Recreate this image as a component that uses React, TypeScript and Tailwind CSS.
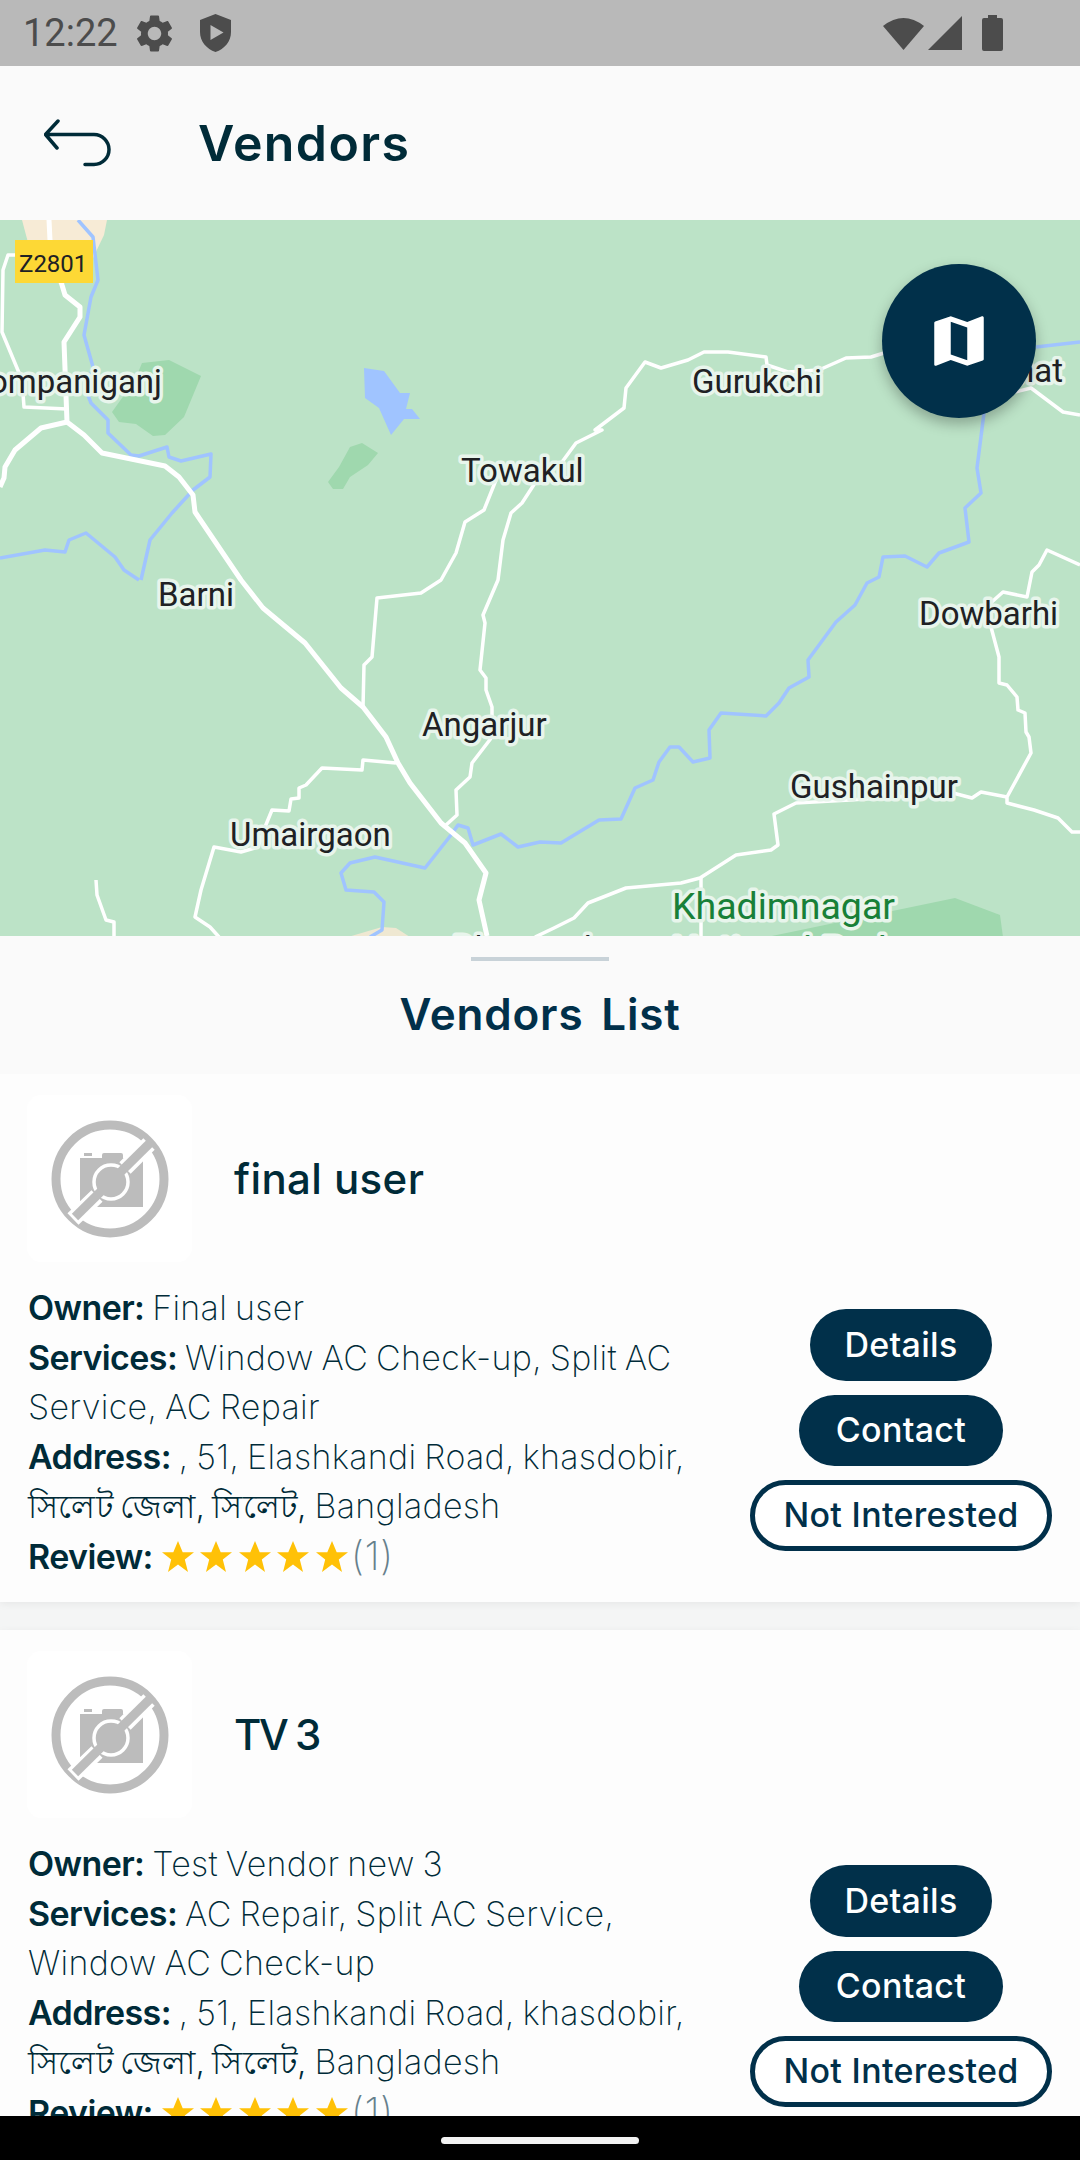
const NAVY = '#01304a';

const MAJOR_ROADS = [
  '49,220 50,240 62,285 65,295 80,307 80,317 64,342 67,422 84,435 102,453 165,466 179,477 193,495 195,512 241,580 263,608 305,643 341,688 363,707 386,737 398,763 410,783 441,823 465,843 486,873 479,900 487,936',
  '67,422 41,428 15,450 5,467 4,478 0,487',
];

const MINOR_ROADS = [
  '15,255 8,255 3,270 2,332 22,380 24,407 67,409',
  '496,480 484,510 465,522 456,553 441,580 421,593 377,598 372,657 364,665 363,707',
  '535,483 522,503 511,513 503,540 498,580 483,615 485,623 480,670 486,678 486,690 492,707 492,737 472,763 470,777 456,790 457,815 446,825',
  '535,483 562,462 576,443 602,430 595,430 624,408 626,388 645,362 661,368 688,360 704,352 728,352 766,357 767,365 788,372 819,370 846,358 871,357 884,353',
  '1015,392 1031,388 1063,412 1080,415',
  '1080,565 1047,550 1039,565 1032,572 1027,597 1003,592 985,608',
  '991,627 999,657 999,683 1007,685 1017,697 1018,710 1025,713 1026,732 1029,737 1031,753 1007,797 1007,803 1034,810 1058,818 1072,832 1080,832',
  '1007,797 981,792 972,798 953,793 850,800 796,803 774,814 778,845 771,850 736,855 700,878 681,883 626,888 588,903 574,918 554,928 535,937',
  '701,878 701,936',
  '396,763 363,760 362,770 322,768 306,785 299,788 299,798 291,799 289,811 272,810 265,827 258,847 241,852 214,847 201,890 195,917 210,927 219,937',
  '96,880 97,895 106,920 114,922 114,937',
];

const RIVERS = [
  '78,220 93,237 98,280 91,297 84,335 93,367 86,390 91,403 108,420 108,433 131,455 139,456 167,447 169,457 181,461 211,454 210,477 193,490 172,513 150,540 141,580',
  '0,558 45,550 65,552 69,540 86,533 115,557 124,570 139,580',
  '984,413 977,468 981,493 965,508 969,542 939,553 927,567 905,556 883,557 879,577 867,583 855,605 836,622 808,660 809,677 789,688 779,703 766,716 721,713 709,730 710,758 693,762 679,747 670,747 659,762 653,780 635,788 621,819 599,820 561,843 540,842 518,847 501,834 473,845 468,828 458,825 451,835 425,868 375,857 350,863 341,873 346,890 374,892 384,902 382,930 370,937',
  '1036,347 1080,342',
];

const LABELS = [
  { text: 'Companiganj', x: 162, y: 393, anchor: 'end' },
  { text: 'Gurukchi', x: 692, y: 393 },
  { text: 'Kalirhat', x: 1063, y: 382, anchor: 'end' },
  { text: 'Towakul', x: 461, y: 482 },
  { text: 'Barni', x: 158, y: 606 },
  { text: 'Dowbarhi', x: 919, y: 625 },
  { text: 'Angarjur', x: 422, y: 736 },
  { text: 'Gushainpur', x: 790, y: 798 },
  { text: 'Umairgaon', x: 230, y: 846 },
  { text: 'Dhanagul', x: 453, y: 960 },
];

const VENDORS = [
  {
    name: 'final user',
    nameClass: 'tracking-[0.4px]',
    owner: 'Final user',
    services: 'Window AC Check-up, Split AC Service, AC Repair',
  },
  {
    name: 'TV 3',
    nameClass: 'tracking-[-2.5px]',
    owner: 'Test Vendor new 3',
    services: 'AC Repair, Split AC Service, Window AC Check-up',
  },
];

const VendorMap = () => (
  <svg className="block h-full w-full" viewBox="0 220 1080 716">
    <rect x="0" y="220" width="1080" height="716" fill="#bce3c7" />
    <polygon points="22,220 107,220 104,235 93,258 60,285 30,250" fill="#f7ebd6" />
    <polygon points="348,937 382,927 396,928 410,937" fill="#efe8d2" />
    <g fill="#9fd8ae">
      <polygon points="142,363 169,360 201,376 184,417 165,435 153,436 136,424 119,422 112,412 135,380" />
      <polygon points="350,447 362,443 378,453 368,465 350,477 343,489 333,489 328,482 339,467" />
      <polygon points="767,937 955,898 1000,915 1003,937" />
    </g>
    <polygon
      points="364,368 384,371 400,393 410,393 406,409 412,409 420,419 404,419 391,435 379,408 365,398"
      fill="#a0c4ff"
    />
    <g fill="none" stroke="#a0c4ff" strokeWidth="3.5" strokeLinejoin="round">
      {RIVERS.map((points) => (
        <polyline key={points} points={points} />
      ))}
    </g>
    <g fill="none" stroke="#ffffff" strokeLinejoin="round">
      {MINOR_ROADS.map((points) => (
        <polyline key={points} points={points} strokeWidth="3.5" />
      ))}
      {MAJOR_ROADS.map((points) => (
        <polyline key={points} points={points} strokeWidth="5" />
      ))}
    </g>
    <g fontFamily="Roboto, sans-serif" fontSize="33" fill="#202124" stroke="#e8f5ec" strokeWidth="7" paintOrder="stroke" strokeLinejoin="round">
      {LABELS.map((label) => (
        <text key={label.text} x={label.x} y={label.y} textAnchor={label.anchor}>
          {label.text}
        </text>
      ))}
      <text x="672" y="919" fontSize="37.500" fill="#188038">
        Khadimnagar
      </text>
      <text x="672" y="963" fontSize="37.500" fill="#188038">
        National Park
      </text>
    </g>
    <rect x="15" y="240" width="78" height="43" fill="#fdd835" />
    <text x="19" y="272" fontFamily="Roboto, sans-serif" fontSize="24" fill="#202124">
      Z2801
    </text>
  </svg>
);

const StatusBar = () => (
  <div className="relative flex h-[66px] shrink-0 items-center justify-between bg-[#b9b9b9] pl-[23px] pr-[77px] text-[#4c4c4c]">
    <div className="flex items-center">
      <span className="font-['Roboto',sans-serif] text-[38px] leading-none">12:22</span>
      <svg className="ml-[14px] h-[45px] w-[45px]" viewBox="0 0 24 24" fill="currentColor">
        <path d="M19.14,12.94c0.04-0.3,0.06-0.61,0.06-0.94c0-0.32-0.02-0.64-0.07-0.94l2.03-1.58c0.18-0.14,0.23-0.41,0.12-0.61 l-1.92-3.32c-0.12-0.22-0.37-0.29-0.59-0.22l-2.39,0.96c-0.5-0.38-1.03-0.7-1.62-0.94L14.4,2.81c-0.04-0.24-0.24-0.41-0.48-0.41 h-3.84c-0.24,0-0.43,0.17-0.47,0.41L9.25,5.35C8.66,5.59,8.12,5.92,7.63,6.29L5.24,5.33c-0.22-0.08-0.47,0-0.59,0.22L2.74,8.87 C2.62,9.08,2.66,9.34,2.86,9.48l2.03,1.58C4.84,11.36,4.8,11.69,4.8,12s0.02,0.64,0.07,0.94l-2.03,1.58 c-0.18,0.14-0.23,0.41-0.12,0.61l1.92,3.32c0.12,0.22,0.37,0.29,0.59,0.22l2.39-0.96c0.5,0.38,1.03,0.7,1.62,0.94l0.36,2.54 c0.05,0.24,0.24,0.41,0.48,0.41h3.84c0.24,0,0.44-0.17,0.47-0.41l0.36-2.54c0.59-0.24,1.13-0.56,1.62-0.94l2.39,0.96 c0.22,0.08,0.47,0,0.59-0.22l1.92-3.32c0.12-0.22,0.07-0.47-0.12-0.61L19.14,12.94z M12,15.6c-1.98,0-3.6-1.62-3.6-3.6 s1.62-3.6,3.6-3.6s3.6,1.62,3.6,3.6S13.98,15.6,12,15.6z" />
      </svg>
      <svg className="ml-[23px] h-[38px] w-[31px]" viewBox="0 0 31 38">
        <path
          fillRule="evenodd"
          fill="currentColor"
          d="M15.5 0 31 6v12c0 9.5-6.5 17-15.5 20C6.5 35 0 27.5 0 18V6zM10.5 11v15l13-7.5z"
        />
      </svg>
    </div>
    <div className="flex items-center">
      <svg className="h-[34px] w-[41px]" viewBox="0 0 41 34" fill="currentColor">
        <path d="M0 10Q20.5-6 41 10L20.5 34z" />
      </svg>
      <svg className="ml-[4px] h-[34px] w-[34px]" viewBox="0 0 34 34" fill="currentColor">
        <path d="M34 0v34H0z" />
      </svg>
      <svg className="ml-[20px] h-[36px] w-[21px]" viewBox="0 0 21 36" fill="currentColor">
        <path d="M6 0h9v3h4a2 2 0 0 1 2 2v29a2 2 0 0 1-2 2H2a2 2 0 0 1-2-2V5a2 2 0 0 1 2-2h4z" />
      </svg>
    </div>
  </div>
);

const Header = () => (
  <header className="flex h-[154px] shrink-0 items-center bg-[#fafafa] pl-[44px]">
    <svg className="h-[48px] w-[68px]" viewBox="0 0 68 48" fill="none" stroke="#002b38" strokeWidth="3.5" strokeLinecap="round" strokeLinejoin="round">
      <path d="M14 2 1.500 15.500 13 29M1.500 15.500H50a15 15 0 0 1 0 30H41" />
    </svg>
    <h1 className="ml-[86px] font-['Inter',sans-serif] text-[50px] font-semibold leading-none tracking-[1.4px] text-[#002b38]">
      Vendors
    </h1>
  </header>
);

// camera with a slash, white edge only outside the lens
const NoImage = () => (
  <svg className="h-[118px] w-[118px]" viewBox="0 0 118 118">
    <circle cx="59" cy="59" r="54" fill="none" stroke="#bcbcbc" strokeWidth="9" />
    <path fill="#bcbcbc" d="M29 38h22v-3q0-2 2-2h17q2 0 2 2v3h20v49H29z" />
    <rect x="33" y="33" width="8" height="3" fill="#bcbcbc" />
    <circle cx="60" cy="62" r="17" fill="none" stroke="#ffffff" strokeWidth="3.500" />
    <path d="M98 24 74 48M46 76 22 99" stroke="#ffffff" strokeWidth="16" />
    <path d="M100 22 24 97" stroke="#bcbcbc" strokeWidth="9" />
  </svg>
);

const Stars = () => (
  <span className="ml-[9px] inline-flex items-center gap-[6.500px]">
    {[0, 1, 2, 3, 4].map((star) => (
      <svg key={star} className="h-[31px] w-[32px]" viewBox="0 0 32 31" fill="#ffc107">
        <path d="M16 0l4.700 11.300H32l-9.200 7.300L26 31l-10-7.400L6 31l3.200-12.400L0 11.300h11.300z" />
      </svg>
    ))}
  </span>
);

interface VendorCardProps {
  vendor: (typeof VENDORS)[number];
}

const VendorCard = ({ vendor }: VendorCardProps) => (
  <article className="h-[528px] shrink-0 bg-[#fdfdfd] shadow-[0_2px_8px_rgba(0,0,0,0.06)]">
    <div className="flex items-center pl-[27px] pt-[21px]">
      <div className="flex h-[167px] w-[165px] items-center justify-center rounded-[14px] bg-white">
        <NoImage />
      </div>
      <h2 className={`ml-[42px] font-['Inter',sans-serif] text-[42px] font-medium leading-none text-[#002b38] ${vendor.nameClass}`}>
        {vendor.name}
      </h2>
    </div>
    <div className="flex">
      <div className="ml-[28px] mt-[21px] w-[694px] font-['Inter','Noto_Sans',sans-serif] text-[34px] font-extralight leading-[49.500px] tracking-[0.3px] text-[#002b38] [word-spacing:-2px]">
        <p>
          <b className="font-semibold tracking-[-0.6px]">Owner:</b> {vendor.owner}
        </p>
        <p>
          <b className="font-semibold tracking-[-0.6px]">Services:</b> {vendor.services}
        </p>
        <p>
          <b className="font-semibold tracking-[-0.6px]">Address:</b> , 51, Elashkandi Road, khasdobir,{' '}
          <span className="text-[32px] font-light">সিলেট জেলা, সিলেট,</span> Bangladesh
        </p>
        <p className="flex items-center">
          <b className="font-semibold tracking-[-0.6px]">Review:</b>
          <Stars />
          <span className="ml-[3px] text-[40px] leading-none text-[#66808c]">(1)</span>
        </p>
      </div>
      <div className="ml-[28px] mt-[47px] flex w-[302px] flex-col items-center gap-[14px] font-['Inter',sans-serif] text-[34px] font-medium tracking-[0.3px]">
        <button className="flex h-[72px] w-[182px] items-center justify-center rounded-full bg-[#01304a] pb-[2px] text-white">
          Details
        </button>
        <button className="flex h-[71px] w-[204px] items-center justify-center rounded-full bg-[#01304a] pb-[2px] text-white">
          Contact
        </button>
        <button className="flex h-[71px] w-[302px] items-center justify-center rounded-full border-[5px] border-[#01304a] bg-white pb-[2px] text-[#01304a]">
          Not Interested
        </button>
      </div>
    </div>
  </article>
);

const App = () => (
  <div className="flex h-[2160px] w-[1080px] flex-col overflow-hidden bg-[#f4f5f5]">
    <StatusBar />
    <Header />
    <section className="relative h-[716px] shrink-0 overflow-hidden">
      <VendorMap />
      <button
        className="absolute left-[882px] top-[44px] flex h-[154px] w-[154px] items-center justify-center rounded-full shadow-[0_6px_14px_rgba(0,0,0,0.28)]"
        style={{ backgroundColor: NAVY }}
      >
        <svg className="h-[66px] w-[66px]" viewBox="0 0 24 24" fill="#ffffff">
          <path d="M20.500 3l-.16.03L15 5.100 9 3 3.360 4.900c-.21.07-.36.25-.36.48V20.500c0 .28.22.5.5.5l.16-.03L9 18.900l6 2.100 5.640-1.900c.21-.07.36-.25.36-.48V3.500c0-.28-.22-.5-.5-.5zM15 19l-6-2.110V5l6 2.110V19z" />
        </svg>
      </button>
    </section>
    <div className="flex h-[138px] shrink-0 flex-col items-center bg-[#fafafa] pt-[21px]">
      <div className="h-[4px] w-[138px] bg-[#c8d2d8]" />
      <h2 className="mt-[31px] font-['Inter',sans-serif] text-[44px] font-semibold leading-none tracking-[0.8px] text-[#01304a] [word-spacing:6px]">
        Vendors List
      </h2>
    </div>
    <div className="flex min-h-0 flex-1 flex-col gap-[28px] overflow-hidden">
      {VENDORS.map((vendor) => (
        <VendorCard key={vendor.name} vendor={vendor} />
      ))}
    </div>
    <div className="flex h-[44px] shrink-0 justify-center bg-black pt-[21px]">
      <div className="h-[7px] w-[198px] rounded-full bg-[#f2f2f2]" />
    </div>
  </div>
);

export default App;
